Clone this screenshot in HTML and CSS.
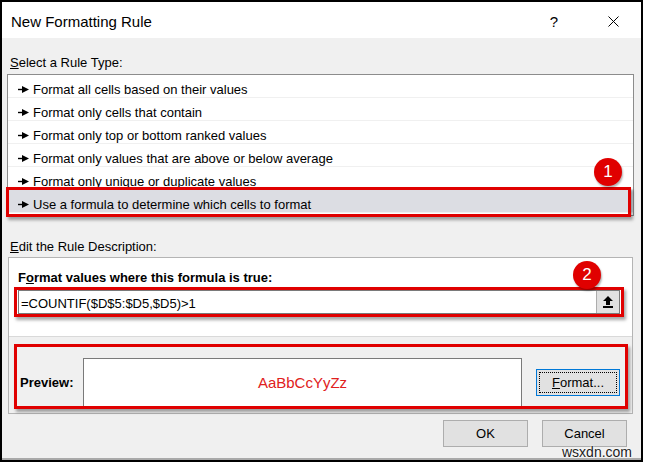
FILE: index.html
```html
<!DOCTYPE html>
<html lang="en">
<head>
    <meta charset="UTF-8">
    <meta name="viewport" content="width=device-width, initial-scale=1.0">
    <title>New Formatting Rule</title>
    <link rel="stylesheet" href="styles.css">
</head>
<body>

<div class="dialog">
    <div class="titlebar">
        <span class="title">New Formatting Rule</span>
        <span class="help">?</span>
        <span class="close">
            <svg width="11" height="11" viewBox="0 0 11 11"><path d="M0.5 0.5L10.5 10.5M10.5 0.5L0.5 10.5" stroke="#000" stroke-width="1"/></svg>
        </span>
    </div>

    <div class="content">
        <div class="caption"><u>S</u>elect a Rule Type:</div>
        <ul class="rules">
            <li><svg class="arrow" width="11" height="7" viewBox="0 0 11 7"><path d="M0 3.5H5" stroke="#000" stroke-width="1.4"/><path d="M4 0L11 3.5L4 7Z"/></svg>Format all cells based on their values</li>
            <li><svg class="arrow" width="11" height="7" viewBox="0 0 11 7"><path d="M0 3.5H5" stroke="#000" stroke-width="1.4"/><path d="M4 0L11 3.5L4 7Z"/></svg>Format only cells that contain</li>
            <li><svg class="arrow" width="11" height="7" viewBox="0 0 11 7"><path d="M0 3.5H5" stroke="#000" stroke-width="1.4"/><path d="M4 0L11 3.5L4 7Z"/></svg>Format only top or bottom ranked values</li>
            <li><svg class="arrow" width="11" height="7" viewBox="0 0 11 7"><path d="M0 3.5H5" stroke="#000" stroke-width="1.4"/><path d="M4 0L11 3.5L4 7Z"/></svg>Format only values that are above or below average</li>
            <li><svg class="arrow" width="11" height="7" viewBox="0 0 11 7"><path d="M0 3.5H5" stroke="#000" stroke-width="1.4"/><path d="M4 0L11 3.5L4 7Z"/></svg>Format only unique or duplicate values</li>
            <li class="selected"><svg class="arrow" width="11" height="7" viewBox="0 0 11 7"><path d="M0 3.5H5" stroke="#000" stroke-width="1.4"/><path d="M4 0L11 3.5L4 7Z"/></svg>Use a formula to determine which cells to format</li>
        </ul>

        <div class="caption caption-edit"><u>E</u>dit the Rule Description:</div>
        <div class="rule-desc">
            <div class="formula-pane">
                <div class="pane-title">F<u>o</u>rmat values where this formula is true:</div>
                <div class="formula-input">
                    <span class="formula-text">=COUNTIF($D$5:$D5,$D5)&gt;1</span>
                    <span class="collapse-btn">
                        <svg width="10" height="12" viewBox="0 0 10 12"><path d="M5 0L10 5H7V9H3V5H0Z"/><rect x="0" y="10" width="10" height="2"/></svg>
                    </span>
                </div>
            </div>
            <div class="preview-pane">
                <span class="preview-label">Preview:</span>
                <div class="preview-box">AaBbCcYyZz</div>
                <button type="button" class="btn btn-format"><span class="focus"><u>F</u>ormat...</span></button>
            </div>
        </div>

        <div class="actions">
            <button type="button" class="btn">OK</button>
            <button type="button" class="btn">Cancel</button>
        </div>
    </div>

    <!-- annotations drawn over the dialog -->
    <div class="mark mark-rule"></div>
    <div class="mark mark-formula"></div>
    <div class="mark mark-preview"></div>
    <div class="badge badge-1">1</div>
    <div class="badge badge-2">2</div>
    <div class="watermark">wsxdn.com</div>
</div>

</body>
</html>
```

FILE: styles.css
```css
body {
    margin: 0;
    background-color: #fff;
    font-family: "Liberation Sans", Arial, sans-serif;
    font-size: 13px;
    color: #000;
}
.dialog {
    position: relative;
    width: 643px;
    height: 462px;
    box-sizing: border-box;
    border: 2px solid #000;
    background-color: #f0f0f0;
}
.titlebar {
    display: flex;
    align-items: center;
    height: 36px;
    box-sizing: border-box;
    padding: 3px 5px 0 9px;
    background-color: #fff;
}
.title {
    flex: 1;
    font-size: 15px;
}
.help {
    width: 32px;
    text-align: center;
    font-size: 15px;
}
.close {
    width: 46px;
    margin-left: 20px;
    display: flex;
    justify-content: center;
}
.content {
    height: 422px;
    box-sizing: border-box;
    padding: 17px 7px 0 5px;
    border-bottom: 2px solid #a9a9a9;
}
.caption {
    margin-left: 3px;
    margin-bottom: 3px;
    line-height: 16px;
}
.caption-edit {
    margin-top: 23px;
    margin-bottom: 2px;
}
.rules {
    list-style: none;
    margin: 0;
    padding: 0 0 2px;
    border: 1px solid #8c8c8c;
    background-color: #fff;
}
.rules li {
    height: 23px;
    box-sizing: border-box;
    padding: 7px 0 0 10px;
    line-height: 15px;
    border-bottom: 1px solid #f0f0f0;
    white-space: nowrap;
}
.rules li.selected {
    background-color: #dcdde3;
}
.arrow {
    margin-right: 4px;
    vertical-align: 1px;
}
.rule-desc {
    margin: 0 1px;
    border: 1px solid #b4b4b4;
}
.formula-pane {
    height: 79px;
    box-sizing: border-box;
    padding: 12px 12px 0 9px;
    background-color: #fff;
    border-bottom: 1px solid #d9d9d9;
}
.pane-title {
    font-weight: bold;
    line-height: 16px;
    margin-bottom: 4px;
}
.formula-input {
    display: flex;
    height: 24px;
    box-sizing: border-box;
    border: 1px solid #7a7a7a;
    background-color: #fff;
}
.formula-text {
    flex: 1;
    padding: 4px 0 0 2px;
    line-height: 17px;
}
.collapse-btn {
    width: 22px;
    display: flex;
    align-items: center;
    justify-content: center;
    background-color: #e1e1e1;
    border-left: 1px solid #adadad;
}
.preview-pane {
    display: flex;
    align-items: flex-start;
    height: 76px;
    box-sizing: border-box;
    padding: 21px 12px 0 11px;
}
.preview-label {
    width: 63px;
    font-weight: bold;
    line-height: 50px;
}
.preview-box {
    width: 439px;
    height: 50px;
    box-sizing: border-box;
    border: 1px solid #7a7a7a;
    border-bottom: none;
    background-color: #fff;
    color: #e02020;
    font-size: 15px;
    line-height: 48px;
    text-align: center;
}
.btn {
    width: 85px;
    height: 27px;
    padding: 0;
    font-family: inherit;
    font-size: 13px;
    color: #000;
    background-color: #e1e1e1;
    border: 1px solid #adadad;
}
.btn-format {
    width: 84px;
    margin: 11px 0 0 14px;
    padding: 2px;
    border-color: #0078d7;
}
.btn-format .focus {
    display: block;
    height: 100%;
    box-sizing: border-box;
    border: 1px dotted #000;
    line-height: 19px;
}
.actions {
    display: flex;
    justify-content: flex-end;
    gap: 14px;
    margin-top: 6px;
    padding-right: 7px;
}
.mark {
    position: absolute;
    box-sizing: border-box;
    border: 3px solid #e00000;
    box-shadow: 2px 3px 3px rgba(0, 0, 0, 0.35);
}
.mark-rule {
    left: 4px;
    top: 185px;
    width: 625px;
    height: 30px;
}
.mark-formula {
    left: 12px;
    top: 285px;
    width: 610px;
    height: 30px;
}
.mark-preview {
    left: 12px;
    top: 342px;
    width: 614px;
    height: 65px;
}
.badge {
    position: absolute;
    width: 28px;
    height: 28px;
    border-radius: 50%;
    background-color: #e00000;
    color: #fff;
    font-size: 17px;
    line-height: 28px;
    text-align: center;
    box-shadow: 1px 2px 2px rgba(0, 0, 0, 0.3);
}
.badge-1 {
    left: 592px;
    top: 156px;
}
.badge-2 {
    left: 571px;
    top: 259px;
}
.watermark {
    position: absolute;
    left: 560px;
    top: 442px;
    font-size: 14px;
    line-height: 16px;
    color: #222;
    text-shadow: 0 0 2px #fff, 0 0 2px #fff;
}
```
